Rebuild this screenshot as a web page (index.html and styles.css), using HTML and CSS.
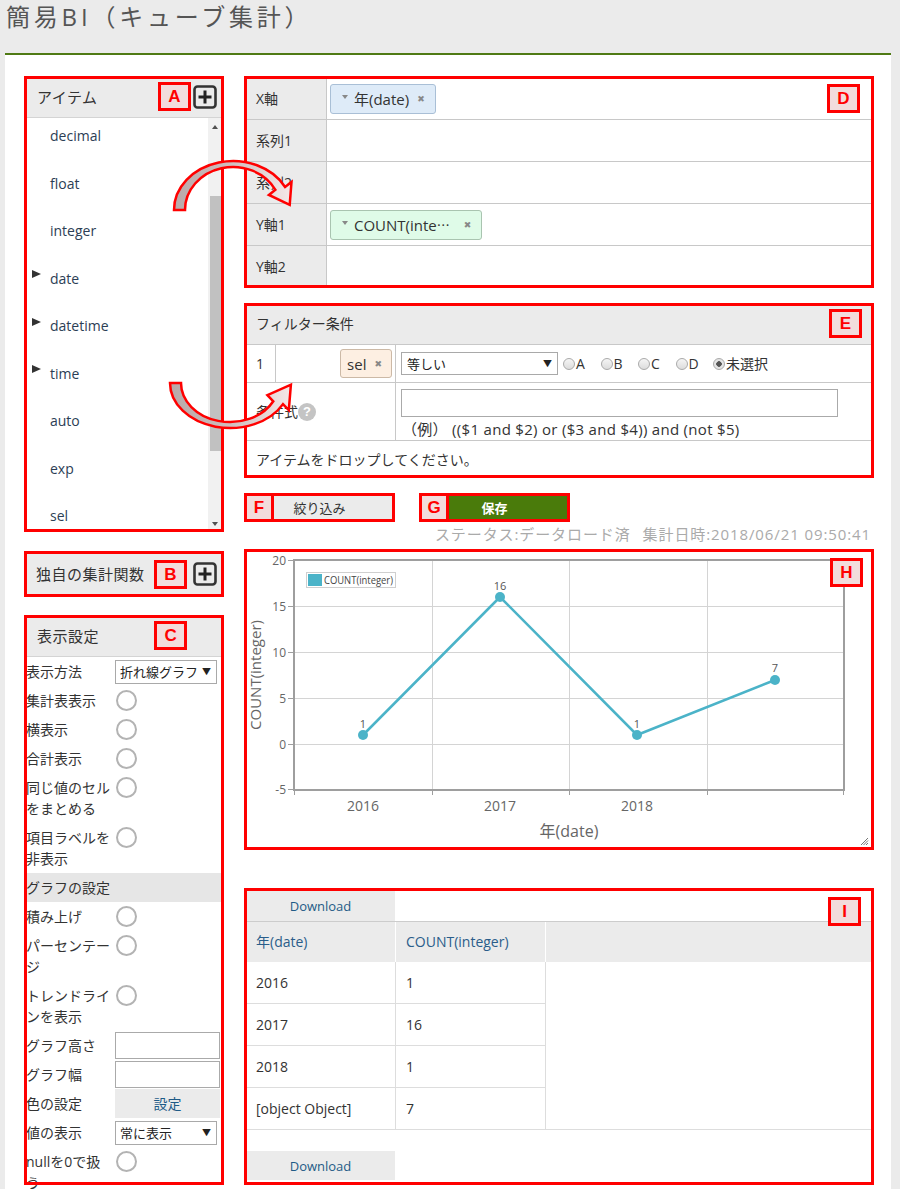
FILE: index.html
```html
<!DOCTYPE html>
<html lang="ja">
<head>
<meta charset="utf-8">
<title>簡易BI（キューブ集計）</title>
<link rel="stylesheet" href="styles.css">
</head>
<body>
<header class="top"><h1 class="title">簡易BI（キューブ集計）</h1></header>
<main class="main">
  <aside class="left">
    <section class="items ann">
      <div class="panel-head">
        <span class="panel-title">アイテム</span>
        <span class="tag head-tag">A</span>
        <svg class="plus" viewBox="0 0 24 24"><rect x="1.5" y="1.5" width="21" height="21" rx="3" fill="none" stroke="#333" stroke-width="2.6"/><path d="M12 5.5V18.5M5.5 12H18.5" stroke="#222" stroke-width="3"/></svg>
      </div>
      <div class="items-body">
        <ul class="item-list">
          <li><span class="exp"></span>decimal</li>
          <li><span class="exp"></span>float</li>
          <li><span class="exp"></span>integer</li>
          <li><span class="exp exp-on"></span>date</li>
          <li><span class="exp exp-on"></span>datetime</li>
          <li><span class="exp exp-on"></span>time</li>
          <li><span class="exp"></span>auto</li>
          <li><span class="exp"></span>exp</li>
          <li><span class="exp"></span>sel</li>
        </ul>
        <div class="scrollbar">
          <span class="sb-btn sb-up"></span>
          <div class="sb-track"><div class="sb-thumb"></div></div>
          <span class="sb-btn sb-down"></span>
        </div>
      </div>
    </section>

    <section class="custom ann">
      <span class="panel-title">独自の集計関数</span>
      <span class="tag">B</span>
      <svg class="plus" viewBox="0 0 24 24"><rect x="1.5" y="1.5" width="21" height="21" rx="3" fill="none" stroke="#333" stroke-width="2.6"/><path d="M12 5.5V18.5M5.5 12H18.5" stroke="#222" stroke-width="3"/></svg>
    </section>

    <section class="settings ann">
      <div class="panel-head">
        <span class="panel-title">表示設定</span>
        <span class="tag set-tag">C</span>
      </div>
      <div class="set-body">
        <div class="set-row"><span class="set-label">表示方法</span><span class="fsel">折れ線グラフ<span class="fcaret">▼</span></span></div>
        <div class="set-row"><span class="set-label">集計表表示</span><span class="toggle"></span></div>
        <div class="set-row"><span class="set-label">横表示</span><span class="toggle"></span></div>
        <div class="set-row"><span class="set-label">合計表示</span><span class="toggle"></span></div>
        <div class="set-row"><span class="set-label">同じ値のセルをまとめる</span><span class="toggle"></span></div>
        <div class="set-row"><span class="set-label">項目ラベルを非表示</span><span class="toggle"></span></div>
        <div class="set-section">グラフの設定</div>
        <div class="set-row"><span class="set-label">積み上げ</span><span class="toggle"></span></div>
        <div class="set-row"><span class="set-label">パーセンテージ</span><span class="toggle"></span></div>
        <div class="set-row"><span class="set-label">トレンドラインを表示</span><span class="toggle"></span></div>
        <div class="set-row"><span class="set-label">グラフ高さ</span><span class="finput"></span></div>
        <div class="set-row"><span class="set-label">グラフ幅</span><span class="finput"></span></div>
        <div class="set-row"><span class="set-label">色の設定</span><span class="fbtn">設定</span></div>
        <div class="set-row"><span class="set-label">値の表示</span><span class="fsel">常に表示<span class="fcaret">▼</span></span></div>
        <div class="set-row"><span class="set-label">nullを0で扱う</span><span class="toggle"></span></div>
      </div>
    </section>
  </aside>

  <div class="right">
    <section class="axes ann">
      <div class="axis-row">
        <div class="axis-label">X軸</div>
        <div class="axis-drop">
          <span class="chip chip-blue"><span class="chip-caret"></span>年(date)<span class="chip-x">✖</span></span>
          <span class="tag">D</span>
        </div>
      </div>
      <div class="axis-row"><div class="axis-label">系列1</div><div class="axis-drop"></div></div>
      <div class="axis-row"><div class="axis-label">系列2</div><div class="axis-drop"></div></div>
      <div class="axis-row">
        <div class="axis-label">Y軸1</div>
        <div class="axis-drop">
          <span class="chip chip-green"><span class="chip-caret"></span>COUNT(inte<span class="ell">…</span><span class="chip-x chip-x-wide">✖</span></span>
        </div>
      </div>
      <div class="axis-row"><div class="axis-label">Y軸2</div><div class="axis-drop"></div></div>
    </section>

    <section class="filter ann">
      <div class="filter-head"><span>フィルター条件</span><span class="tag">E</span></div>
      <div class="f-row f-row1">
        <div class="f-no">1</div>
        <div class="f-item"><span class="chip chip-peach">sel<span class="chip-x">✖</span></span></div>
        <div class="f-cond">
          <span class="fsel fsel-eq">等しい<span class="fcaret">▼</span></span>
          <span class="radio"><span class="radio-dot"></span>A</span>
          <span class="radio"><span class="radio-dot"></span>B</span>
          <span class="radio"><span class="radio-dot"></span>C</span>
          <span class="radio"><span class="radio-dot"></span>D</span>
          <span class="radio radio-last"><span class="radio-dot radio-on"></span>未選択</span>
        </div>
      </div>
      <div class="f-row f-row2">
        <div class="f-label">条件式<span class="help">?</span></div>
        <div class="f-expr">
          <div class="f-input"></div>
          <div class="f-example">（例） (($1 and $2) or ($3 and $4)) and (not $5)</div>
        </div>
      </div>
      <div class="f-row f-row3">アイテムをドロップしてください。</div>
    </section>

    <div class="actions">
      <div class="act act-filter ann"><span class="tag act-tag">F</span>絞り込み</div>
      <div class="act act-save ann"><span class="tag act-tag">G</span>保存</div>
    </div>
    <div class="status">ステータス:データロード済<span class="status-time">集計日時:2018/06/21 09:50:41</span></div>

    <section class="chart ann">
      <svg class="chart-svg" width="630" height="301" viewBox="244 549 630 301">
        <g stroke="#d4d4d4" stroke-width="1">
          <line x1="294" y1="606.5" x2="844" y2="606.5"/>
          <line x1="294" y1="652.5" x2="844" y2="652.5"/>
          <line x1="294" y1="698.5" x2="844" y2="698.5"/>
          <line x1="294" y1="744.5" x2="844" y2="744.5"/>
          <line x1="432.5" y1="560" x2="432.5" y2="790"/>
          <line x1="569.5" y1="560" x2="569.5" y2="790"/>
          <line x1="707.5" y1="560" x2="707.5" y2="790"/>
        </g>
        <rect x="294" y="560" width="550" height="230" fill="none" stroke="#9e9e9e" stroke-width="2"/>
        <g stroke="#9e9e9e" stroke-width="1">
          <line x1="288" y1="560.5" x2="294" y2="560.5"/>
          <line x1="288" y1="606.5" x2="294" y2="606.5"/>
          <line x1="288" y1="652.5" x2="294" y2="652.5"/>
          <line x1="288" y1="698.5" x2="294" y2="698.5"/>
          <line x1="288" y1="744.5" x2="294" y2="744.5"/>
          <line x1="288" y1="789.5" x2="294" y2="789.5"/>
          <line x1="294.5" y1="790" x2="294.5" y2="795"/>
          <line x1="432.5" y1="790" x2="432.5" y2="795"/>
          <line x1="569.5" y1="790" x2="569.5" y2="795"/>
          <line x1="707.5" y1="790" x2="707.5" y2="795"/>
          <line x1="843.5" y1="790" x2="843.5" y2="795"/>
        </g>
        <g class="ax-y" text-anchor="end">
          <text x="286" y="565">20</text>
          <text x="286" y="611">15</text>
          <text x="286" y="657">10</text>
          <text x="286" y="703">5</text>
          <text x="286" y="749">0</text>
          <text x="286" y="794">-5</text>
        </g>
        <g class="ax-x" text-anchor="middle">
          <text x="363" y="811">2016</text>
          <text x="500" y="811">2017</text>
          <text x="637" y="811">2018</text>
        </g>
        <text class="ax-title" x="569" y="837" text-anchor="middle">年(date)</text>
        <text class="ax-title ax-title-y" x="0" y="0" text-anchor="middle" transform="translate(261 675) rotate(-90)">COUNT(integer)</text>
        <rect x="306.5" y="572.5" width="89" height="15" fill="#fff" stroke="#cfcfcf"/>
        <rect x="308" y="574" width="14" height="12" fill="#4bb3c8"/>
        <text class="legend" x="324" y="584" textLength="69" lengthAdjust="spacingAndGlyphs">COUNT(integer)</text>
        <polyline points="363,735 500,597 637,735 775,680" fill="none" stroke="#4bb3c8" stroke-width="2.5" stroke-linejoin="round"/>
        <g fill="#4bb3c8">
          <circle cx="363" cy="735" r="5"/>
          <circle cx="500" cy="597" r="5"/>
          <circle cx="637" cy="735" r="5"/>
          <circle cx="775" cy="680" r="5"/>
        </g>
        <g class="pt" text-anchor="middle">
          <text x="363" y="728">1</text>
          <text x="500" y="590">16</text>
          <text x="637" y="728">1</text>
          <text x="775" y="672">7</text>
        </g>
        <g stroke="#777" stroke-width="1">
          <line x1="861" y1="845" x2="868" y2="838"/>
          <line x1="863.5" y1="845" x2="868" y2="840.5"/>
          <line x1="866" y1="845" x2="868" y2="843"/>
        </g>
      </svg>
      <span class="tag chart-tag">H</span>
    </section>

    <section class="result ann">
      <div class="dl">Download</div>
      <div class="res-grid">
        <div class="rh">年(date)</div>
        <div class="rh">COUNT(integer)</div>
        <div class="rh rh-rest"></div>
        <div class="rc">2016</div><div class="rc">1</div>
        <div class="rest"></div>
        <div class="rc">2017</div><div class="rc">16</div>
        <div class="rc">2018</div><div class="rc">1</div>
        <div class="rc rc-last">[object Object]</div><div class="rc rc-last">7</div>
      </div>
      <div class="dl dl-bottom">Download</div>
      <span class="tag result-tag">I</span>
    </section>
  </div>
</main>

<svg class="arrows" width="900" height="1189" viewBox="0 0 900 1189">
  <defs>
    <linearGradient id="ag" gradientUnits="userSpaceOnUse" x1="170" y1="0" x2="300" y2="0">
      <stop offset="0" stop-color="#b8a8a8"/>
      <stop offset="0.45" stop-color="#cdbdbd"/>
      <stop offset="1" stop-color="#fbeeee"/>
    </linearGradient>
  </defs>
  <path d="M174,210 A59 49 0 0 1 285.1,187 L291.5,181.9 L289.7,204.9 L268.9,194.9 L275.4,189.8 A48 43 0 0 0 185,210 Z" fill="url(#ag)" stroke="#ff0000" stroke-width="2.5" stroke-linejoin="miter"/>
  <path d="M170,383 A60 45 0 0 0 283,404.1 L288.8,410.2 L290.9,384.7 L267.4,395.2 L273.3,401.3 A49 39 0 0 1 181,383 Z" fill="url(#ag)" stroke="#ff0000" stroke-width="2.5" stroke-linejoin="miter"/>
</svg>
</body>
</html>
```

FILE: styles.css
```css
* { box-sizing: border-box; }
html, body { margin: 0; padding: 0; }
body {
  position: relative;
  width: 900px;
  height: 1189px;
  overflow: hidden;
  background: #ebebeb;
  color: #333;
  font-family: "Open Sans", "Noto Sans CJK JP", sans-serif;
  font-size: 14px;
  line-height: 20px;
}

/* header */
.top {
  margin: 0 9px 0 5px;
  height: 55px;
  border-bottom: 2px solid #4f7a14;
}
.title {
  margin: 0;
  padding: 1px 0 0 1px;
  font-size: 24px;
  line-height: 32px;
  font-weight: normal;
  letter-spacing: 3.8px;
  color: #555;
}

.main {
  margin: 0 9px 0 5px;
  height: 1134px;
  background: #fff;
  padding: 21px 0 0 19px;
  display: flex;
  gap: 20px;
  align-items: flex-start;
}

.ann { outline: 3px solid #ff0000; outline-offset: -3px; }

.tag {
  flex: none;
  width: 33px;
  height: 29px;
  border: 3px solid #ff0000;
  background: #f2dcdc;
  color: #ff0000;
  font: bold 17px/23px "Liberation Sans", "Open Sans", sans-serif;
  text-align: center;
}

.plus { flex: none; width: 24px; height: 24px; display: block; }

/* left column */
.left { width: 200px; flex: none; display: flex; flex-direction: column; }

.panel-head {
  height: 42px;
  flex: none;
  display: flex;
  align-items: center;
  background: #ebebeb;
  border-bottom: 1px solid #d4d4d4;
  padding: 0 7px 0 13px;
}
.panel-title { font-size: 15px; letter-spacing: 0.5px; color: #333; }
.head-tag { margin-left: auto; margin-right: 2px; }

.items { height: 456px; display: flex; flex-direction: column; background: #fff; }
.items-body { flex: 1; display: flex; overflow: hidden; }
.item-list { flex: 1; list-style: none; margin: 0; padding: 0; }
.item-list li {
  height: 47.5px;
  padding: 8px 0 0 8px;
  display: flex;
  align-items: flex-start;
  color: #2c3e55;
  line-height: 20px;
}
.exp { flex: none; width: 18px; height: 20px; }
.exp-on::before {
  content: "";
  display: block;
  margin-top: 1.5px;
  width: 0;
  height: 0;
  border-left: 9px solid #333;
  border-top: 4.5px solid transparent;
  border-bottom: 4.5px solid transparent;
}

.scrollbar {
  flex: none;
  width: 13px;
  margin-right: 3px;
  display: flex;
  flex-direction: column;
  background: #f1f1f1;
}
.sb-btn { height: 17px; display: flex; align-items: center; justify-content: center; }
.sb-up::before {
  content: "";
  border-left: 3.5px solid transparent;
  border-right: 3.5px solid transparent;
  border-bottom: 4px solid #505050;
}
.sb-down::before {
  content: "";
  border-left: 3.5px solid transparent;
  border-right: 3.5px solid transparent;
  border-top: 4px solid #505050;
}
.sb-track { flex: 1; }
.sb-thumb { margin: 61px 0 0 2px; width: 11px; height: 255px; background: #c1c1c1; }

.custom {
  margin-top: 19px;
  height: 46px;
  display: flex;
  align-items: center;
  background: #ebebeb;
  padding: 0 7px 0 12px;
}
.custom .tag { margin-left: auto; margin-right: 6px; }

.settings { margin-top: 18px; height: 570px; background: #fff; }
.set-tag { margin-left: 55px; }
.set-body { padding-left: 2px; }
.set-row { display: flex; align-items: flex-start; padding: 4px 0; }
.set-label { flex: none; width: 86px; line-height: 21px; color: #333; }
.toggle {
  flex: none;
  width: 21px;
  height: 21px;
  border: 2px solid #b3b3b3;
  border-radius: 50%;
  margin-left: 4px;
}
.finput {
  flex: none;
  width: 105px;
  height: 27px;
  border: 1px solid #aaa;
  margin: -3px 0 -3px 3px;
}
.fbtn {
  flex: none;
  width: 105px;
  height: 29px;
  margin: -4px 0 -4px 3px;
  background: #ebebeb;
  color: #1f5b87;
  text-align: center;
  line-height: 29px;
}
.fsel {
  flex: none;
  width: 102px;
  height: 24px;
  margin: -1px 0 -2px 3px;
  border: 1px solid #a9a9a9;
  background: #fff;
  display: flex;
  align-items: center;
  justify-content: space-between;
  padding: 0 5px 0 4px;
  color: #222;
  font-size: 13px;
  white-space: nowrap;
  overflow: hidden;
}
.fcaret { font-size: 9px; line-height: 10px; color: #222; flex: none; }
.set-section {
  height: 29px;
  line-height: 29px;
  background: #e6e6e6;
  margin-right: 2px;
}

/* right column */
.right { width: 630px; flex: none; display: flex; flex-direction: column; }

.axes { height: 212px; padding-top: 2px; background: #fff; }
.axis-row { display: flex; height: 42px; border-bottom: 1px solid #c8c8c8; }
.axis-row:last-child { border-bottom: 0; }
.axis-label {
  flex: none;
  width: 83px;
  background: #ebebeb;
  border-right: 1px solid #c8c8c8;
  padding-left: 12px;
  display: flex;
  align-items: center;
}
.axis-drop { flex: 1; display: flex; align-items: center; padding: 0 14px 0 3px; }
.axis-drop .tag { margin-left: auto; }

.chip {
  display: inline-flex;
  align-items: center;
  height: 30px;
  border: 1px solid #a9b6c4;
  border-radius: 3px;
  padding: 0 10px 0 11px;
  font-size: 15px;
  color: #333;
}
.chip-blue { background: #deebf8; border-color: #a9bfd6; }
.chip-green { background: #dffbe8; border-color: #a9c4b0; }
.chip-peach { background: #fdefe2; border-color: #ccb9a6; height: 29px; padding: 0 9px 0 6px; }
.chip-caret {
  width: 0;
  height: 0;
  border-top: 4px solid #888;
  border-left: 3.5px solid transparent;
  border-right: 3.5px solid transparent;
  margin: -3px 6px 0 0;
}
.chip-x { font-family: "DejaVu Sans", sans-serif; font-size: 9px; color: #888; margin-left: 8px; }
.chip-x-wide { margin-left: 14px; }
.ell { font-family: "Noto Sans CJK JP", sans-serif; font-size: 13px; }

.filter { margin-top: 15px; height: 175px; background: #fff; }
.filter-head {
  height: 42px;
  background: #ebebeb;
  border-bottom: 1px solid #c8c8c8;
  display: flex;
  align-items: center;
  justify-content: space-between;
  padding: 0 12px;
}
.f-row { display: flex; border-bottom: 1px solid #c8c8c8; }
.f-row1 { height: 38px; }
.f-no { flex: none; width: 32px; border-right: 1px solid #c8c8c8; padding-left: 12px; display: flex; align-items: center; }
.f-item { flex: none; width: 120px; border-right: 1px solid #c8c8c8; display: flex; align-items: center; justify-content: flex-end; padding-right: 3px; }
.f-cond { flex: 1; display: flex; align-items: center; padding-left: 5px; }
.fsel-eq { width: 157px; height: 23px; margin: 0 5px 0 0; padding: 0 5px; }
.radio { display: inline-flex; align-items: center; width: 37.5px; flex: none; }
.radio-last { width: auto; }
.radio-dot {
  flex: none;
  width: 12px;
  height: 12px;
  border: 1px solid #aaa;
  border-radius: 50%;
  background: linear-gradient(#f5f5f5, #dcdcdc);
  margin-right: 1px;
}
.radio-on { background: radial-gradient(circle, #555 0 2.5px, #e4e4e4 3px); }

.f-row2 { height: 58px; }
.f-label { flex: none; width: 152px; border-right: 1px solid #c8c8c8; padding-left: 12px; display: flex; align-items: center; }
.help {
  display: inline-block;
  width: 18px;
  height: 18px;
  border-radius: 50%;
  background: #c4c4c4;
  color: #fff;
  font: bold 13px/18px "Liberation Sans", sans-serif;
  text-align: center;
}
.f-expr { flex: 1; padding: 6px 0 0 5px; }
.f-input { width: 437px; height: 28px; border: 1px solid #aaa; }
.f-example { margin-top: 2px; line-height: 20px; padding-left: 1px; font-size: 15px; letter-spacing: 0.3px; }
.f-row3 { height: 37px; border-bottom: 0; padding-left: 12px; align-items: center; }

.actions { margin-top: 15px; display: flex; gap: 24px; height: 29px; }
.act {
  position: relative;
  width: 151px;
  height: 29px;
  display: flex;
  align-items: center;
  justify-content: center;
  font-size: 13px;
}
.act-filter { background: #ebebeb; color: #333; }
.act-save { background: #4a7b0b; color: #fff; font-weight: bold; }
.act-tag { position: absolute; left: 0; top: 0; width: 30px; height: 29px; font-weight: bold; }

.status {
  line-height: 24px;
  text-align: right;
  padding-right: 3px;
  color: #aaa;
  font-size: 15px;
  letter-spacing: 0.9px;
}
.status-time { margin-left: 12px; }

.chart { margin-top: 3px; height: 301px; background: #fff; position: relative; }
.chart-svg { display: block; font-family: "Open Sans", "Noto Sans CJK JP", sans-serif; }
.ax-y { font-size: 12px; fill: #666; }
.ax-x { font-size: 14px; fill: #666; }
.ax-title { font-size: 16px; fill: #666; }
.ax-title-y { font-size: 15px; }
.legend { font-size: 10px; fill: #444; }
.pt { font-size: 11px; fill: #555; }
.chart-tag { position: absolute; right: 11px; top: 9px; }

.result { margin-top: 38px; height: 297px; padding: 3px 3px 0 2px; background: #fff; position: relative; }
.result-tag { position: absolute; right: 13px; top: 9px; }
.dl {
  width: 149px;
  height: 30px;
  background: #ebebeb;
  color: #1f5b87;
  display: flex;
  align-items: center;
  justify-content: center;
  font-size: 13px;
}
.dl-bottom { margin-top: 21px; height: 29px; }
.res-grid {
  display: grid;
  grid-template-columns: 150px 150px 1fr;
  border-top: 1px solid #ccc;
  border-bottom: 1px solid #ddd;
}
.rh {
  height: 40px;
  background: #ebebeb;
  color: #2a5d8a;
  display: flex;
  align-items: center;
  padding-left: 10px;
  border-right: 1px solid #fff;
}
.rh-rest { border-right: 0; }
.rc {
  height: 42px;
  border-bottom: 1px solid #ddd;
  border-right: 1px solid #ddd;
  display: flex;
  align-items: center;
  padding-left: 10px;
  color: #333;
}
.rc-last { border-bottom: 0; height: 41px; }
.rest { grid-column: 3; grid-row: 2 / span 4; }

.arrows { position: absolute; left: 0; top: 0; pointer-events: none; }
```
